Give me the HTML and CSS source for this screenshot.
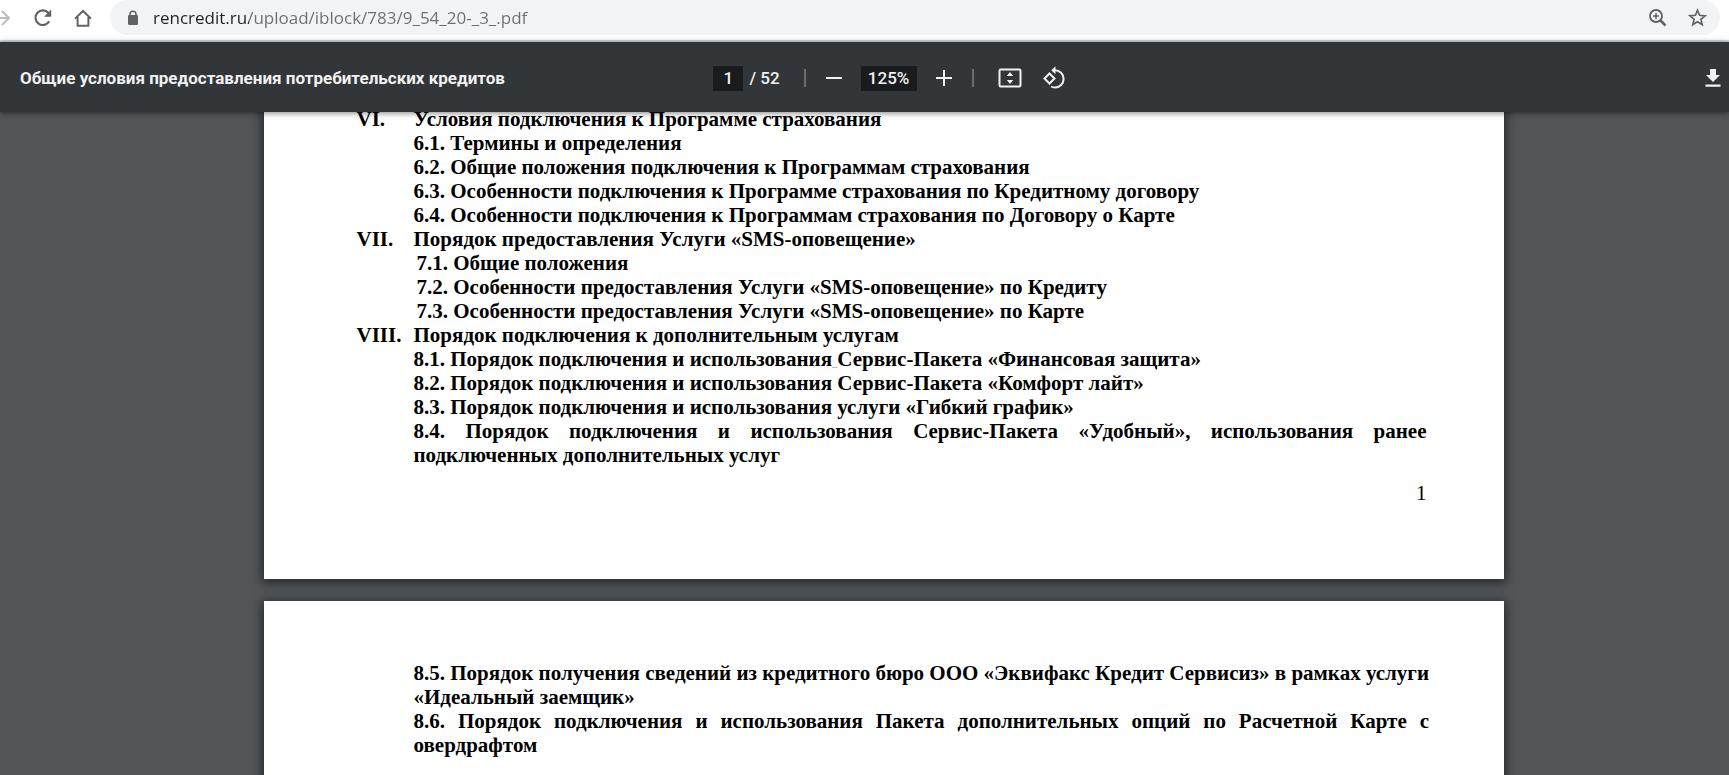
FILE: index.html
```html
<!DOCTYPE html>
<html lang="ru">
<head>
<meta charset="utf-8">
<title>Общие условия предоставления потребительских кредитов</title>
<link rel="stylesheet" href="styles.css">
</head>
<body>
<header class="browser-bar">
  <nav class="nav">
    <button class="icon-btn nav-forward" aria-label="Вперёд" disabled>
      <svg width="20" height="20" viewBox="0 0 20 20" fill="none" stroke="currentColor" stroke-width="2"><path d="M1 10h17M11 3l7 7-7 7"/></svg>
    </button>
    <button class="icon-btn" aria-label="Обновить">
      <svg width="20" height="20" viewBox="0 0 20 20"><path d="M16.2 13.2A7.3 7.3 0 1 1 15.4 5" fill="none" stroke="currentColor" stroke-width="2.2"/><path d="M18.2 1.6v7.2h-7.2z" fill="currentColor"/></svg>
    </button>
    <button class="icon-btn" aria-label="Главная">
      <svg width="20" height="20" viewBox="0 0 20 20" fill="none" stroke="currentColor" stroke-width="2"><path d="M2 10.6 10 3l8 7.600M4.600 9v8.800h10.800V9"/></svg>
    </button>
  </nav>
  <div class="address">
    <svg class="lock" width="12" height="16" viewBox="0 0 12 16"><rect x="1" y="5" width="10" height="10" rx="1.200" fill="currentColor"/><path d="M3 6V4.200a3 3 0 0 1 6 0V6" fill="none" stroke="currentColor" stroke-width="1.600"/></svg>
    <input class="url" type="text" aria-label="Адрес" value="rencredit.ru/upload/iblock/783/9_54_20-_3_.pdf">
    <button class="icon-btn" aria-label="Масштаб">
      <svg width="20" height="20" viewBox="0 0 20 20" fill="none" stroke="currentColor"><circle cx="8" cy="8" r="6" stroke-width="1.800"/><path d="M8 5v6M5 8h6" stroke-width="1.500"/><path d="m12.500 12.500 5 5" stroke-width="2.500"/></svg>
    </button>
    <button class="icon-btn" aria-label="В закладки">
      <svg width="20" height="20" viewBox="0 0 20 20" fill="none" stroke="currentColor" stroke-width="1.700"><path d="m9.500 2.300 2.100 5 5.500.500-4.200 3.600 1.300 5.300-4.700-2.900-4.700 2.900 1.300-5.300-4.200-3.600 5.500-.500z"/></svg>
    </button>
  </div>
</header>

<div class="pdf-bar">
  <h1 class="doc-title">Общие условия предоставления потребительских кредитов</h1>
  <div class="controls">
    <div class="pager">
      <input class="field field-page" type="text" aria-label="Страница" value="1">
      <span>/ 52</span>
    </div>
    <span class="divider"></span>
    <div class="zoom">
      <button class="icon-btn" aria-label="Уменьшить">
        <svg width="24" height="24" viewBox="0 0 24 24" stroke="currentColor" stroke-width="2"><path d="M4 12h16"/></svg>
      </button>
      <input class="field field-zoom" type="text" aria-label="Масштаб документа" value="125%">
      <button class="icon-btn" aria-label="Увеличить">
        <svg width="24" height="24" viewBox="0 0 24 24" stroke="currentColor" stroke-width="2"><path d="M4 12h16M12 4v16"/></svg>
      </button>
    </div>
    <span class="divider"></span>
    <div class="view">
      <button class="icon-btn" aria-label="По размеру страницы">
        <svg width="24" height="24" viewBox="0 0 24 24"><rect x="1.500" y="3.500" width="21" height="17" rx="1.200" fill="none" stroke="currentColor" stroke-width="2"/><path d="m12 6 3.200 4H8.800zM12 18l3.200-4H8.800z" fill="currentColor"/></svg>
      </button>
      <button class="icon-btn" aria-label="Повернуть">
        <svg width="24" height="24" viewBox="0 0 24 24" fill="none" stroke="currentColor" stroke-width="2"><path d="m7.500 7.500 5 5-5 5-5-5z"/><path d="M11 4.300h2a8.600 8.600 0 1 1 0 17.200c-1.500 0-2.700-.300-3.900-1"/><path d="M13.500.300v8l-4.200-4z" fill="currentColor" stroke="none"/></svg>
      </button>
    </div>
  </div>
  <button class="icon-btn download" aria-label="Скачать">
    <svg width="20" height="20" viewBox="0 0 20 20" fill="currentColor"><path d="M7 1h6v6h4l-7 7-7-7h4zM2.500 16.500h15v2.200h-15z"/></svg>
  </button>
</div>

<main class="viewer">
  <section class="page page-first">
    <section class="chapter">
      <span class="numeral">VI.</span>
      <div class="entries">
        <p>Условия подключения к Программе страхования</p>
        <p>6.1. Термины и определения</p>
        <p>6.2. Общие положения подключения к Программам страхования</p>
        <p>6.3. Особенности подключения к Программе страхования по Кредитному договору</p>
        <p>6.4. Особенности подключения к Программам страхования по Договору о Карте</p>
      </div>
    </section>
    <section class="chapter">
      <span class="numeral">VII.</span>
      <div class="entries">
        <p>Порядок предоставления Услуги «SMS-оповещение»</p>
        <p class="inset">7.1. Общие положения</p>
        <p class="inset">7.2. Особенности предоставления Услуги «SMS-оповещение» по Кредиту</p>
        <p class="inset">7.3. Особенности предоставления Услуги «SMS-оповещение» по Карте</p>
      </div>
    </section>
    <section class="chapter">
      <span class="numeral">VIII.</span>
      <div class="entries">
        <p>Порядок подключения к дополнительным услугам</p>
        <p>8.1. Порядок подключения и использования<span class="marked-space"> </span>Сервис-Пакета «Финансовая защита»</p>
        <p>8.2. Порядок подключения и использования Сервис-Пакета «Комфорт лайт»</p>
        <p>8.3. Порядок подключения и использования услуги «Гибкий график»</p>
        <p class="justified">8.4. Порядок подключения и использования Сервис-Пакета «Удобный», использования ранее подключенных дополнительных услуг</p>
      </div>
    </section>
    <footer class="page-number">1</footer>
  </section>
  <section class="page page-next">
    <div class="chapter">
      <span class="numeral"></span>
      <div class="entries">
        <p class="unbroken">8.5. Порядок получения сведений из кредитного бюро ООО «Эквифакс Кредит Сервисиз» в рамках услуги<br>«Идеальный заемщик»</p>
        <p class="justified">8.6. Порядок подключения и использования Пакета дополнительных опций по Расчетной Карте с овердрафтом</p>
      </div>
    </div>
  </section>
</main>
</body>
</html>
```
FILE: styles.css
```css
* {
  box-sizing: border-box;
}

body {
  margin: 0;
  height: 100vh;
  display: flex;
  flex-direction: column;
  overflow: hidden;
  background: #525659;
}

.icon-btn {
  display: flex;
  padding: 0;
  border: 0;
  background: none;
  color: inherit;
}

/* Browser toolbar */
.browser-bar {
  flex: none;
  display: flex;
  align-items: flex-start;
  gap: 17px;
  padding-right: 9px;
  height: 42px;
  background: #fff;
  border-bottom: 2px solid #d5d7da;
  color: #5f6368;
}

.nav {
  display: flex;
  align-items: center;
  gap: 20px;
  height: 35px;
  margin-left: -9px;
}

.nav-forward {
  color: #babcbe;
}

.nav-forward + .icon-btn {
  margin-left: 2px;
}

.address {
  flex: 1;
  display: flex;
  align-items: center;
  gap: 20px;
  height: 35px;
  padding: 0 12px 0 17px;
  border-radius: 18px;
  background: #f1f3f4;
}

.lock {
  flex: none;
}

/* The host part is drawn darker than the path */
.url {
  flex: 1;
  min-width: 0;
  margin-left: -6px;
  padding: 0;
  border: 0;
  outline: 0;
  font: 17px/24px "Open Sans", "Noto Sans", sans-serif;
  color: transparent;
  background: linear-gradient(to right, #202124 96px, #6b6f73 96px);
  -webkit-background-clip: text;
  background-clip: text;
}

/* PDF toolbar */
.pdf-bar {
  position: relative;
  z-index: 1;
  flex: none;
  display: grid;
  grid-template-columns: 1fr auto 1fr;
  align-items: center;
  height: 70px;
  padding: 2px 6px 0 20px;
  background: #323639;
  color: #f1f1f1;
  font: 500 17px/24px Roboto, sans-serif;
  box-shadow: 0 1px 6px rgba(0, 0, 0, 0.5);
}

.doc-title {
  margin: 0;
  font-size: 17px;
  line-height: 24px;
  font-weight: 700;
  white-space: nowrap;
}

.controls,
.pager,
.zoom,
.view {
  display: flex;
  align-items: center;
}

.controls {
  gap: 16px;
  margin-left: 36px;
}

.pager {
  gap: 6px;
  margin-right: 8px;
}

.zoom {
  gap: 15px;
}

.view {
  gap: 20px;
  margin-left: 8px;
}

.field {
  height: 25px;
  padding: 0;
  border: 0;
  background: #191b1d;
  color: inherit;
  font: inherit;
  text-align: center;
}

.field-page {
  width: 30px;
}

.field-zoom {
  width: 56px;
}

.divider {
  width: 2px;
  height: 18px;
  background: #6a6d70;
}

.download {
  justify-self: end;
}

/* Document pages */
.viewer {
  flex: 1;
  min-height: 0;
  overflow: hidden;
  display: flex;
  flex-direction: column;
  align-items: center;
  gap: 22px;
  padding-left: 38px;
}

.page {
  flex: none;
  width: 1240px;
  max-width: 100%;
  padding: 0 77px 0 93px;
  background: #fff;
  color: #000;
  font: 700 21px/24px "Liberation Serif", "Times New Roman", serif;
  box-shadow: 0 2px 10px 2px rgba(0, 0, 0, 0.55);
}

.page-first {
  margin-top: -24px;
  padding-top: 19px;
  padding-bottom: 74px;
}

.page-next {
  padding-top: 60px;
  padding-bottom: 72px;
}

.chapter {
  display: grid;
  grid-template-columns: 57px 1fr;
}

.entries p {
  margin: 0;
}

.entries .inset {
  padding-left: 3px;
}

.entries .justified {
  text-align: justify;
}

.entries .unbroken {
  white-space: nowrap;
}

.marked-space {
  text-decoration: underline 1px #9dc3e6;
}

.page-number {
  margin-top: 14px;
  font-weight: 400;
  text-align: right;
}
```
